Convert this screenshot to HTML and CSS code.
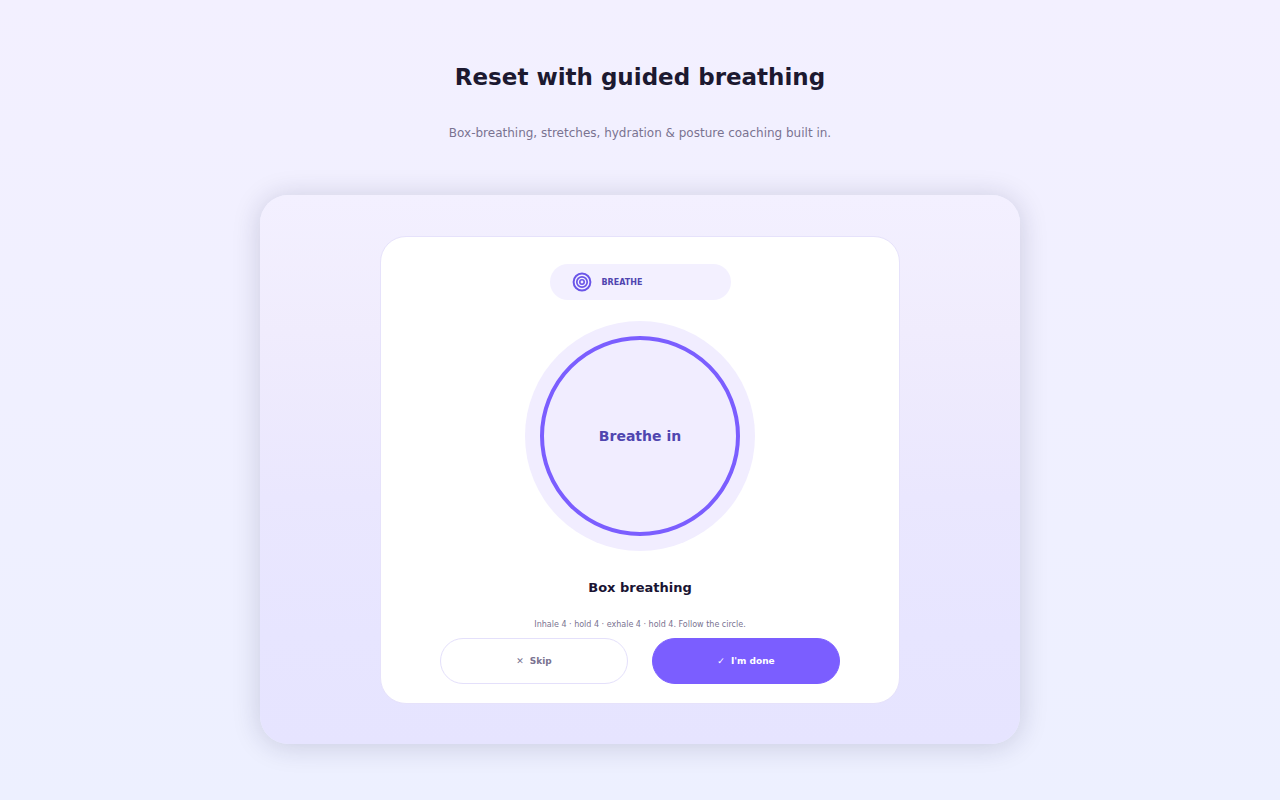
FILE: index.html
```html
<!DOCTYPE html>
<html lang="en">
<head>
    <meta charset="UTF-8">
    <meta name="viewport" content="width=device-width, initial-scale=1.0">
    <title>Reset with guided breathing</title>
    <link rel="stylesheet" href="styles.css">
</head>
<body>
    <header class="intro">
        <h1>Reset with guided breathing</h1>
        <p>Box-breathing, stretches, hydration &amp; posture coaching built in.</p>
    </header>

    <main class="panel">
        <section class="card">
            <div class="tag">
                <svg class="tag-icon" viewBox="0 0 20 20" fill="none" stroke="#6a55e8" stroke-width="2" aria-hidden="true">
                    <circle cx="10" cy="10" r="8.4"/>
                    <circle cx="10" cy="10" r="5.2" stroke-width="1.7"/>
                    <circle cx="10" cy="10" r="2.2" stroke-width="1.6"/>
                </svg>
                <span>BREATHE</span>
            </div>

            <!-- Breathing circle -->
            <div class="halo">
                <div class="ring">Breathe in</div>
            </div>

            <h2>Box breathing</h2>
            <p class="hint">Inhale 4 · hold 4 · exhale 4 · hold 4. Follow the circle.</p>

            <div class="actions">
                <button type="button" class="btn btn-skip"><span class="mark">✕</span>Skip</button>
                <button type="button" class="btn btn-done"><span class="mark">✓</span>I'm done</button>
            </div>
        </section>
    </main>
</body>
</html>
```
FILE: styles.css
```css
* {
    box-sizing: border-box;
}
body {
    margin: 0;
    min-height: 100vh;
    padding: 60px 24px 56px;
    font-family: "DejaVu Sans", sans-serif;
    background: linear-gradient(#f3f0ff, #edf0ff);
    color: #1c1930;
}
h1, h2, p {
    margin: 0;
}
.intro {
    text-align: center;
}
.intro h1 {
    font-size: 23px;
    line-height: 34px;
}
.intro p {
    margin-top: 29px;
    font-size: 12px;
    line-height: 20px;
    color: #7a7391;
}
.panel {
    display: flex;
    justify-content: center;
    max-width: 760px;
    margin: 52px auto 0;
    padding: 41px 24px 40px;
    border-radius: 28px;
    background: linear-gradient(#f3f0ff 0%, #f0ecfd 25%, #eae7fe 55%, #e7e5ff 80%, #e6e4ff 100%);
    box-shadow: 0 2px 28px rgba(30, 25, 70, 0.18);
}
.card {
    display: flex;
    flex-direction: column;
    align-items: center;
    width: 100%;
    max-width: 520px;
    padding: 27px 24px 19px;
    border: 1px solid #e6e2fb;
    border-radius: 26px;
    background: #fff;
}
.tag {
    display: flex;
    align-items: center;
    gap: 10px;
    width: 181px;
    height: 36px;
    padding: 0 22px;
    border-radius: 18px;
    background: #f3f0ff;
    color: #5046b0;
    font-size: 8px;
    font-weight: bold;
}
.tag-icon {
    width: 20px;
    height: 20px;
}
.halo {
    display: flex;
    align-items: center;
    justify-content: center;
    width: 230px;
    height: 230px;
    margin-top: 21px;
    border-radius: 50%;
    background: #f1edff;
}
.ring {
    display: flex;
    align-items: center;
    justify-content: center;
    width: 200px;
    height: 200px;
    border: 4px solid #7b5eff;
    border-radius: 50%;
    color: #5046b0;
    font-size: 14px;
    font-weight: bold;
}
.card h2 {
    margin-top: 27px;
    font-size: 13px;
    line-height: 20px;
    color: #1a1433;
}
.hint {
    margin-top: 20px;
    font-size: 8px;
    line-height: 14px;
    color: #7a7391;
}
.actions {
    display: grid;
    grid-template-columns: 1fr 1fr;
    gap: 24px;
    width: 100%;
    max-width: 400px;
    margin-top: 6px;
}
.btn {
    display: flex;
    align-items: center;
    justify-content: center;
    gap: 6px;
    height: 46px;
    border: 1px solid #e4e0fb;
    border-radius: 23px;
    font-family: inherit;
    font-size: 9px;
    font-weight: bold;
    cursor: pointer;
}
.btn-skip {
    background: #fff;
    color: #7a7391;
}
.btn-done {
    border-color: #7b5eff;
    background: #7b5eff;
    color: #fff;
}
.mark {
    font-weight: normal;
}
```
